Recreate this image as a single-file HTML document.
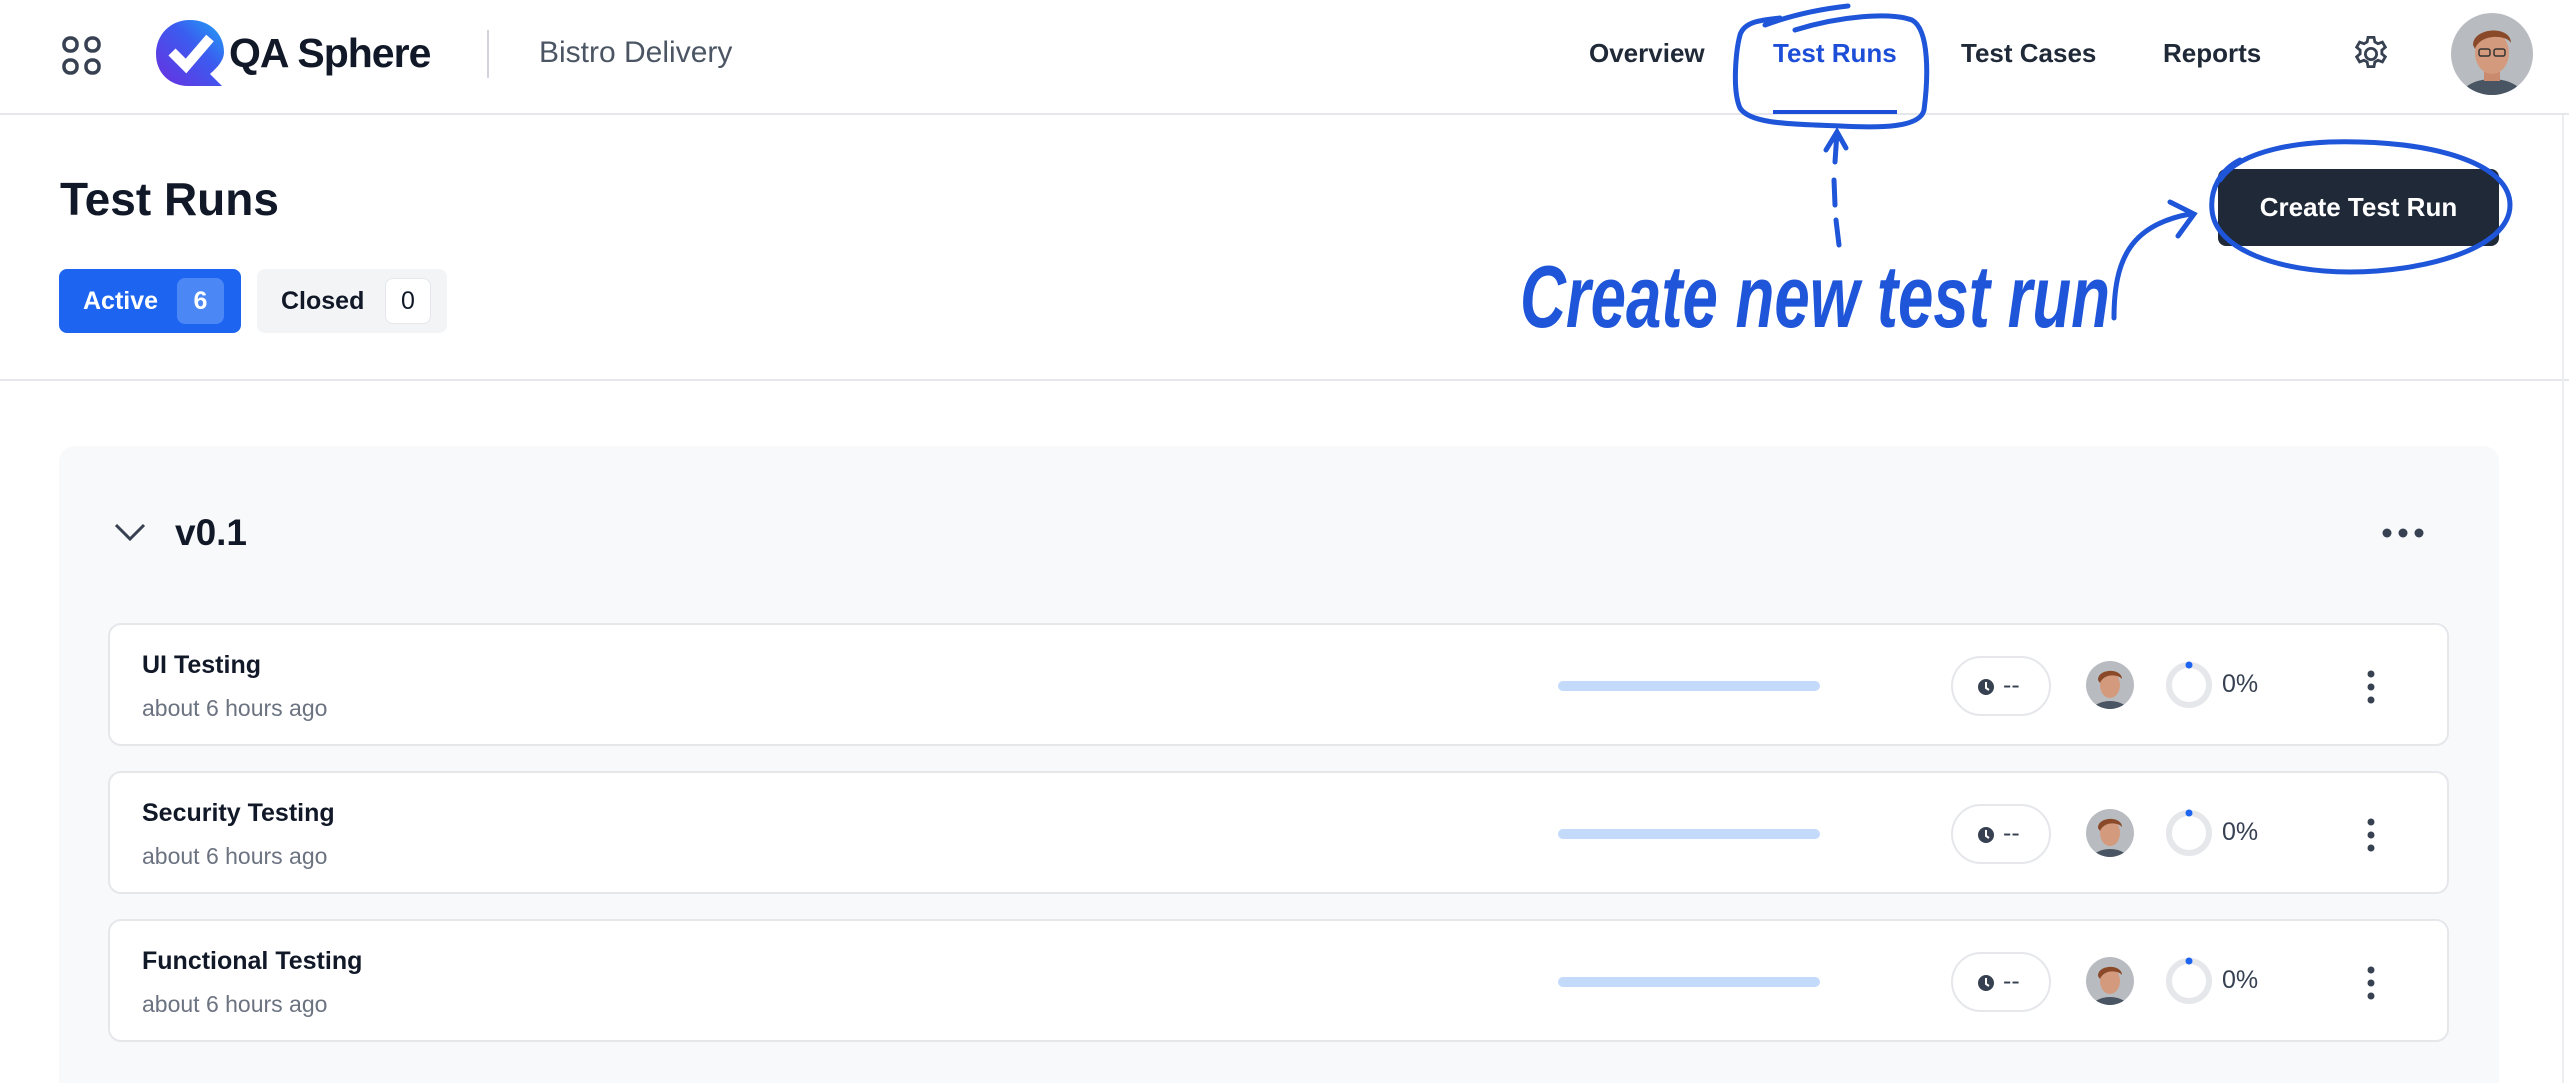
<!DOCTYPE html>
<html><head><meta charset="utf-8">
<style>
*{margin:0;padding:0;box-sizing:border-box}
html,body{width:2569px;height:1083px;overflow:hidden}
body{background:#fff;font-family:"Liberation Sans",Arial,sans-serif;position:relative;color:#111827}
.a{position:absolute;white-space:nowrap}
.nav{font-size:26px;font-weight:700;color:#1f2937;top:38px}
.row{position:absolute;left:108px;width:2341px;background:#fff;border:2px solid #e5e7eb;border-radius:13px}
.rt{position:absolute;left:32px;top:26px;font-size:25px;font-weight:700;color:#111827}
.rs{position:absolute;left:32px;top:70px;font-size:23px;color:#6b7280}
.bar{position:absolute;left:1448px;top:56px;width:262px;height:10px;border-radius:5px;background:#c3dafb}
.pill{position:absolute;left:1841px;top:31px;width:100px;height:60px;border:2px solid #e5e7eb;border-radius:30px}
.pct{position:absolute;left:2112px;top:45px;font-size:25px;color:#374151}
</style></head><body>
<div class="a" style="left:0;top:113px;width:2569px;height:2px;background:#e5e7eb"></div>
<svg class="a" style="left:60px;top:34px" width="44" height="44" viewBox="0 0 44 44" fill="none" stroke="#374151" stroke-width="3.5">
<rect x="4" y="4" width="13" height="13" rx="6"/><rect x="26" y="4" width="13" height="13" rx="6"/><rect x="4" y="26" width="13" height="13" rx="6"/><rect x="26" y="26" width="13" height="13" rx="6"/></svg>
<svg class="a" style="left:150px;top:16px" width="80" height="76" viewBox="0 0 80 76">
<defs><linearGradient id="g" x1="0" y1="1" x2="1" y2="0"><stop offset="0" stop-color="#6b2fe0"/><stop offset=".6" stop-color="#3b5cf0"/><stop offset="1" stop-color="#1fa5f5"/></linearGradient></defs>
<path d="M40 4 C20 4 6 19 6 38 C6 57 20 70 38 70 L72 70 L60 58 C68 51 74 44 74 36 C74 18 60 4 40 4Z" fill="url(#g)"/>
<path d="M22 36 L36 50 L60 22" stroke="#fff" stroke-width="10" fill="none" stroke-linejoin="miter"/>
</svg>
<div class="a" style="left:229px;top:30px;font-size:41px;font-weight:700;color:#111827;letter-spacing:-1px">QA Sphere</div>
<div class="a" style="left:487px;top:30px;width:2px;height:48px;background:#d1d5db"></div>
<div class="a" style="left:539px;top:36px;font-size:30px;color:#4b5563">Bistro Delivery</div>
<div class="a nav" style="left:1589px">Overview</div>
<div class="a nav" style="left:1773px;color:#1d4ed8">Test Runs</div>
<div class="a" style="left:1773px;top:110px;width:124px;height:4px;background:#1d4ed8"></div>
<div class="a nav" style="left:1961px">Test Cases</div>
<div class="a nav" style="left:2163px">Reports</div>
<svg class="a" style="left:2350px;top:33px" width="42" height="42" viewBox="0 0 24 24" fill="none" stroke="#374151" stroke-width="1.6">
<path d="M10.3 2.5h3.4l.5 2.6 1.8 1 2.5-.9 1.7 2.9-2 1.7v2.1l2 1.7-1.7 2.9-2.5-.9-1.8 1-.5 2.6h-3.4l-.5-2.6-1.8-1-2.5.9-1.7-2.9 2-1.7v-2.1l-2-1.7 1.7-2.9 2.5.9 1.8-1z"/><circle cx="12" cy="12" r="3.2"/></svg>
<svg class="a" style="left:2451px;top:13px" width="82" height="82" viewBox="0 0 82 82">
<clipPath id="c1"><circle cx="41" cy="41" r="41"/></clipPath><g clip-path="url(#c1)">
<rect width="82" height="82" fill="#b8bcc0"/><ellipse cx="41" cy="88" rx="34" ry="22" fill="#4a5563"/><rect x="33" y="52" width="16" height="16" fill="#c98a6e"/><ellipse cx="41" cy="40" rx="17" ry="21" fill="#d49a7e"/><path d="M22 32 C22 14 60 12 60 30 C56 22 30 20 24 36Z" fill="#8a4a2a"/><rect x="28" y="36" width="11" height="7" rx="2" fill="none" stroke="#333" stroke-width="1.5"/><rect x="43" y="36" width="11" height="7" rx="2" fill="none" stroke="#333" stroke-width="1.5"/></g></svg>
<div class="a" style="left:60px;top:172px;font-size:46px;font-weight:700;color:#111827">Test Runs</div>
<div class="a" style="left:59px;top:269px;width:182px;height:64px;background:#1d64f0;border-radius:8px"></div>
<div class="a" style="left:83px;top:287px;font-size:25px;font-weight:700;color:#fff">Active</div>
<div class="a" style="left:177px;top:278px;width:47px;height:46px;background:#4b87f5;border-radius:8px;color:#fff;font-size:25px;font-weight:700;text-align:center;line-height:46px">6</div>
<div class="a" style="left:257px;top:269px;width:190px;height:64px;background:#f3f4f6;border-radius:8px"></div>
<div class="a" style="left:281px;top:287px;font-size:25px;font-weight:700;color:#111827">Closed</div>
<div class="a" style="left:385px;top:278px;width:46px;height:46px;background:#fff;border:1px solid #e5e7eb;border-radius:8px;font-size:25px;text-align:center;line-height:44px">0</div>
<div class="a" style="left:2218px;top:169px;width:281px;height:77px;background:#1f2937;border-radius:8px;color:#fff;font-size:26px;font-weight:700;text-align:center;line-height:77px">Create Test Run</div>
<div class="a" style="left:0;top:379px;width:2569px;height:2px;background:#e5e7eb"></div>
<div class="a" style="left:2562px;top:115px;width:2px;height:968px;background:#eceef1"></div>
<div class="a" style="left:59px;top:446px;width:2440px;height:637px;background:#f8f9fb;border-radius:16px 16px 0 0"></div>
<svg class="a" style="left:112px;top:520px" width="36" height="24" viewBox="0 0 36 24" fill="none" stroke="#374151" stroke-width="3"><path d="M4 5 L18 19 L32 5"/></svg>
<div class="a" style="left:175px;top:512px;font-size:37px;font-weight:700;color:#111827">v0.1</div>
<svg class="a" style="left:2380px;top:526px" width="46" height="14"><circle cx="7" cy="7" r="4.5" fill="#374151"/><circle cx="23" cy="7" r="4.5" fill="#374151"/><circle cx="39" cy="7" r="4.5" fill="#374151"/></svg>

<div class="row" style="top:623px;height:123px">
<div class="rt">UI Testing</div><div class="rs">about 6 hours ago</div><div class="bar"></div>
<div class="pill"><svg style="position:absolute;left:24px;top:20px" width="18" height="18"><circle cx="9" cy="9" r="8" fill="#374151"/><path d="M9 4v6l3 2" stroke="#fff" stroke-width="2" fill="none"/></svg><span style="position:absolute;left:50px;top:13px;font-size:25px;color:#374151">--</span></div>
<svg style="position:absolute;left:1975px;top:35px" width="50" height="50"><clipPath id="r1"><circle cx="25" cy="25" r="24"/></clipPath><g clip-path="url(#r1)"><rect width="50" height="50" fill="#b8bcc0"/><ellipse cx="25" cy="54" rx="20" ry="13" fill="#4a5563"/><ellipse cx="25" cy="25" rx="10" ry="13" fill="#d49a7e"/><path d="M13 20 C13 8 37 8 37 19 C33 14 19 13 15 23Z" fill="#8a4a2a"/></g></svg>
<svg style="position:absolute;left:2054px;top:35px" width="50" height="50"><circle cx="25" cy="25" r="20" fill="none" stroke="#e5e7eb" stroke-width="6"/><circle cx="25" cy="5" r="3.5" fill="#1d64f0"/></svg>
<div class="pct">0%</div>
<svg style="position:absolute;left:2255px;top:44px" width="12" height="36"><circle cx="6" cy="5" r="3.5" fill="#374151"/><circle cx="6" cy="18" r="3.5" fill="#374151"/><circle cx="6" cy="31" r="3.5" fill="#374151"/></svg>
</div>
<div class="row" style="top:771px;height:123px">
<div class="rt">Security Testing</div><div class="rs">about 6 hours ago</div><div class="bar"></div>
<div class="pill"><svg style="position:absolute;left:24px;top:20px" width="18" height="18"><circle cx="9" cy="9" r="8" fill="#374151"/><path d="M9 4v6l3 2" stroke="#fff" stroke-width="2" fill="none"/></svg><span style="position:absolute;left:50px;top:13px;font-size:25px;color:#374151">--</span></div>
<svg style="position:absolute;left:1975px;top:35px" width="50" height="50"><clipPath id="r2"><circle cx="25" cy="25" r="24"/></clipPath><g clip-path="url(#r2)"><rect width="50" height="50" fill="#b8bcc0"/><ellipse cx="25" cy="54" rx="20" ry="13" fill="#4a5563"/><ellipse cx="25" cy="25" rx="10" ry="13" fill="#d49a7e"/><path d="M13 20 C13 8 37 8 37 19 C33 14 19 13 15 23Z" fill="#8a4a2a"/></g></svg>
<svg style="position:absolute;left:2054px;top:35px" width="50" height="50"><circle cx="25" cy="25" r="20" fill="none" stroke="#e5e7eb" stroke-width="6"/><circle cx="25" cy="5" r="3.5" fill="#1d64f0"/></svg>
<div class="pct">0%</div>
<svg style="position:absolute;left:2255px;top:44px" width="12" height="36"><circle cx="6" cy="5" r="3.5" fill="#374151"/><circle cx="6" cy="18" r="3.5" fill="#374151"/><circle cx="6" cy="31" r="3.5" fill="#374151"/></svg>
</div>
<div class="row" style="top:919px;height:123px">
<div class="rt">Functional Testing</div><div class="rs">about 6 hours ago</div><div class="bar"></div>
<div class="pill"><svg style="position:absolute;left:24px;top:20px" width="18" height="18"><circle cx="9" cy="9" r="8" fill="#374151"/><path d="M9 4v6l3 2" stroke="#fff" stroke-width="2" fill="none"/></svg><span style="position:absolute;left:50px;top:13px;font-size:25px;color:#374151">--</span></div>
<svg style="position:absolute;left:1975px;top:35px" width="50" height="50"><clipPath id="r3"><circle cx="25" cy="25" r="24"/></clipPath><g clip-path="url(#r3)"><rect width="50" height="50" fill="#b8bcc0"/><ellipse cx="25" cy="54" rx="20" ry="13" fill="#4a5563"/><ellipse cx="25" cy="25" rx="10" ry="13" fill="#d49a7e"/><path d="M13 20 C13 8 37 8 37 19 C33 14 19 13 15 23Z" fill="#8a4a2a"/></g></svg>
<svg style="position:absolute;left:2054px;top:35px" width="50" height="50"><circle cx="25" cy="25" r="20" fill="none" stroke="#e5e7eb" stroke-width="6"/><circle cx="25" cy="5" r="3.5" fill="#1d64f0"/></svg>
<div class="pct">0%</div>
<svg style="position:absolute;left:2255px;top:44px" width="12" height="36"><circle cx="6" cy="5" r="3.5" fill="#374151"/><circle cx="6" cy="18" r="3.5" fill="#374151"/><circle cx="6" cy="31" r="3.5" fill="#374151"/></svg>
</div>

<svg class="a" style="left:0;top:0" width="2569" height="1083" fill="none" stroke="#1f55d8" stroke-width="5" stroke-linecap="round">
<path d="M1765 25 C1800 12 1830 8 1848 6 M1795 30 C1840 16 1890 12 1912 20 C1930 30 1928 80 1924 110 C1920 128 1880 128 1840 126 C1790 124 1750 124 1740 108 C1732 90 1736 50 1740 35 C1744 22 1760 20 1780 18"/>
<path d="M1839 245 L1836 220 M1835 205 L1834 180 M1835 162 L1837 132 M1826 150 L1837 132 L1846 148"/>
<path d="M2220 180 C2240 150 2300 140 2360 142 C2440 144 2510 165 2510 205 C2510 250 2420 272 2350 272 C2280 272 2215 250 2212 210 C2210 190 2220 170 2240 160"/>
<path d="M2114 318 C2114 260 2130 225 2190 214 M2170 202 L2194 214 L2178 236"/>
<text x="1520" y="327" font-family="Liberation Sans,sans-serif" font-size="88" font-style="italic" font-weight="700" fill="#1f55d8" stroke="none" textLength="590" lengthAdjust="spacingAndGlyphs">Create new test run</text>
</svg>
</body></html>
